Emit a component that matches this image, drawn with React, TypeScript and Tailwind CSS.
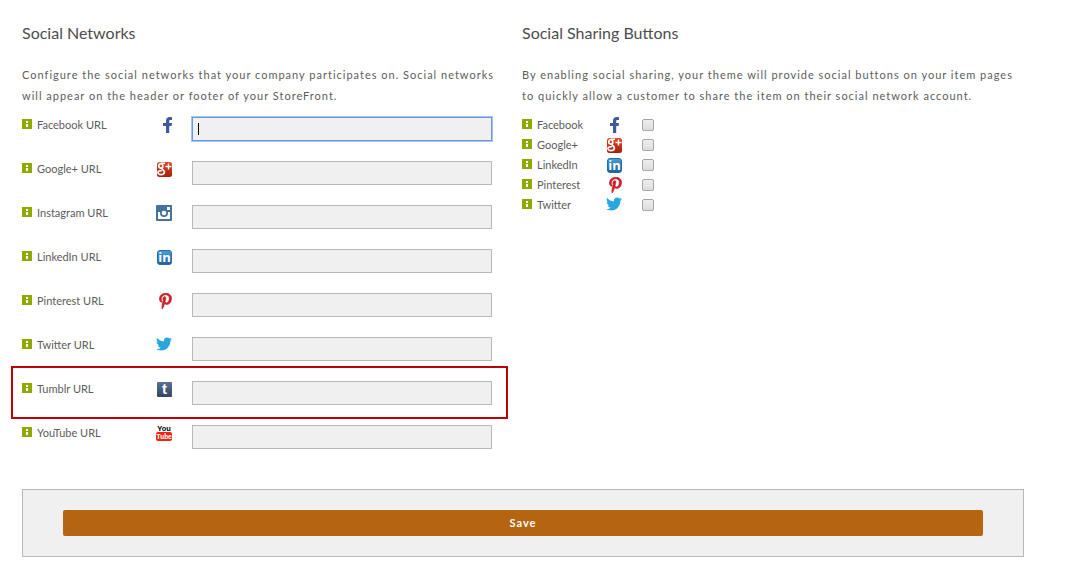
import type { ReactNode } from "react";
import { FaPinterestP, FaTwitter } from "react-icons/fa";

type NetworkId =
  | "facebook"
  | "google"
  | "instagram"
  | "linkedin"
  | "pinterest"
  | "twitter"
  | "tumblr"
  | "youtube";

interface Network {
  id: NetworkId;
  name: string;
}

const NETWORKS: Network[] = [
  { id: "facebook", name: "Facebook" },
  { id: "google", name: "Google+" },
  { id: "instagram", name: "Instagram" },
  { id: "linkedin", name: "LinkedIn" },
  { id: "pinterest", name: "Pinterest" },
  { id: "twitter", name: "Twitter" },
  { id: "tumblr", name: "Tumblr" },
  { id: "youtube", name: "YouTube" },
];

const SHARING_IDS: NetworkId[] = ["facebook", "google", "linkedin", "pinterest", "twitter"];
const SHARING = NETWORKS.filter((network) => SHARING_IDS.includes(network.id));

function InfoIcon() {
  return (
    <svg className="mt-[2px] size-[10px] shrink-0" viewBox="0 0 10 10" shapeRendering="crispEdges" aria-hidden="true">
      <rect width="10" height="10" fill="#8fa900" />
      <path d="M4 2h2v2H4zM4 5h2v3H4z" fill="#fff" />
    </svg>
  );
}

function FacebookIcon() {
  return (
    <svg className="h-4 w-[9px]" viewBox="0 0 9 16">
      <path
        d="M9 .2v2.700H7.600C6.500 2.900 6.200 3.400 6.200 4.300V6H9l-.4 2.900H6.200V16H3V8.900H0V6h3V4C3 1.500 4.500 0 6.800 0z"
        fill="#3f599c"
      />
    </svg>
  );
}

function GooglePlusIcon() {
  return (
    <svg className="size-4" viewBox="0 0 16 16">
      <defs>
        <linearGradient id="google-fill" x1="0" y1="0" x2="0" y2="1">
          <stop offset="0" stopColor="#e2492f" />
          <stop offset="1" stopColor="#a51f0c" />
        </linearGradient>
      </defs>
      <rect x="1" y="1" width="15" height="15" rx="2.5" fill="url(#google-fill)" />
      <g fill="none" stroke="#fff">
        <ellipse cx="4.800" cy="4.900" rx="2" ry="2.300" strokeWidth="1.700" />
        <path
          d="M5 2.200h4M6.300 7c-1.400 1.400 2.100 1.800 2.100 4 0 1.800-1.600 2.600-3.400 2.600S2 12.800 2 11.600c0-1.500 1.800-2 3.800-2"
          strokeWidth="1.600"
        />
        <path d="M12.500 2.500v6M9.500 5.500h6" strokeWidth="1.400" />
      </g>
    </svg>
  );
}

function InstagramIcon() {
  return (
    <svg className="size-4" viewBox="0 0 16 16">
      <rect width="16" height="16" rx="1" fill="#4672a0" />
      <rect x="11" y="2" width="3" height="3" fill="#fff" />
      <path d="M2 7h12v6.500a.5.5 0 0 1-.5.5h-11a.5.5 0 0 1-.5-.5z" fill="#fff" />
      <circle cx="8" cy="8" r="4" fill="#4672a0" />
      <circle cx="8" cy="8" r="2.300" fill="#fff" />
    </svg>
  );
}

function LinkedInIcon() {
  return (
    <svg className="size-4" viewBox="0 0 16 16">
      <defs>
        <linearGradient id="linkedin-fill" x1="0" y1="0" x2="0" y2="1">
          <stop offset="0" stopColor="#4a9fd9" />
          <stop offset="1" stopColor="#1d5f9f" />
        </linearGradient>
      </defs>
      <rect x="1.500" y="1.500" width="14" height="14" rx="2.500" fill="url(#linkedin-fill)" stroke="#2a6aa5" />
      <text x="8.500" y="13" fill="#fff" textAnchor="middle" className="font-['Open_Sans',sans-serif] text-[13px] font-bold">
        in
      </text>
    </svg>
  );
}

function TumblrIcon() {
  return (
    <svg className="size-4" viewBox="0 0 16 16">
      <defs>
        <linearGradient id="tumblr-fill" x1="0" y1="0" x2="0" y2="1">
          <stop offset="0" stopColor="#587194" />
          <stop offset="1" stopColor="#34465f" />
        </linearGradient>
      </defs>
      <rect x="1" y="1" width="15" height="15" rx="1" fill="url(#tumblr-fill)" />
      <text x="8.500" y="13" fill="#fff" textAnchor="middle" className="font-['Liberation_Sans',sans-serif] text-[15px] font-bold">
        t
      </text>
    </svg>
  );
}

function YouTubeIcon() {
  return (
    <svg className="size-4 overflow-visible" viewBox="0 0 16 16">
      <text
        x="8"
        y="6"
        fill="#111"
        textAnchor="middle"
        className="font-['Roboto',sans-serif] text-[8px] leading-none font-bold"
      >
        You
      </text>
      <rect y="7" width="16" height="9" rx="2" fill="#f5200f" />
      <text
        x="8"
        y="14"
        fill="#fff"
        textAnchor="middle"
        className="font-['Roboto',sans-serif] text-[7px] leading-none font-bold"
      >
        Tube
      </text>
    </svg>
  );
}

const ICONS: Record<NetworkId, ReactNode> = {
  facebook: <FacebookIcon />,
  google: <GooglePlusIcon />,
  instagram: <InstagramIcon />,
  linkedin: <LinkedInIcon />,
  pinterest: <FaPinterestP className="h-4 w-[13px] stroke-[#cb2027] stroke-[24] text-[#cb2027]" />,
  twitter: <FaTwitter className="-mt-px size-4 text-[#28a6e0]" />,
  tumblr: <TumblrIcon />,
  youtube: <YouTubeIcon />,
};

function UrlRow({ network }: { network: Network }) {
  const focused = network.id === "facebook";
  return (
    <div className="relative flex h-11 items-start">
      <div className="flex w-[134px] items-start gap-[5px]">
        <InfoIcon />
        <label htmlFor={`${network.id}-url`}>{network.name} URL</label>
      </div>
      <span className="mr-5 flex w-4 justify-end">{ICONS[network.id]}</span>
      <div className="relative w-[300px]">
        <input
          id={`${network.id}-url`}
          type="text"
          className={`block h-6 w-full border bg-[#f0f0f0] px-[5px] outline-none ${
            focused ? "border-[#6d97e0] ring-1 ring-[#a5c3f5]" : "border-[#b8b8b8]"
          }`}
        />
        {focused && <span className="absolute top-[6px] left-[6px] h-3 w-px bg-black" />}
      </div>
      {network.id === "tumblr" && (
        <div className="pointer-events-none absolute -top-[15px] -left-[11px] h-[53px] w-[497px] border-2 border-[#bd0000]" />
      )}
    </div>
  );
}

function SharingRow({ network }: { network: Network }) {
  return (
    <div className="flex h-5 items-start">
      <div className="flex w-[84px] items-start gap-[5px]">
        <InfoIcon />
        <label htmlFor={`${network.id}-share`}>{network.name}</label>
      </div>
      <span className={`mr-5 flex w-4 ${network.id === "facebook" ? "justify-center" : "justify-end"}`}>
        {ICONS[network.id]}
      </span>
      <input
        id={`${network.id}-share`}
        type="checkbox"
        className="mt-[2px] size-3 appearance-none rounded-[2px] border border-[#a6a6a6] bg-linear-to-b from-[#eeeeee] to-[#dcdcdc]"
      />
    </div>
  );
}

function Section({ title, intro, children }: { title: string; intro: string; children: ReactNode }) {
  return (
    <>
      <h2 className="mb-[19px] text-base leading-6 text-[#4d4d4d]">{title}</h2>
      <p className="mb-[11px] leading-[21px] tracking-[1px]">{intro}</p>
      {children}
    </>
  );
}

export default function App() {
  return (
    <form className="bg-white pt-[21px] pr-[55px] pb-5 pl-[22px] font-['Lato',sans-serif] text-[11px] leading-4 text-[#5c5c5c]">
      <div className="flex">
        <section className="w-[500px] shrink-0 pr-4">
          <Section
            title="Social Networks"
            intro="Configure the social networks that your company participates on. Social networks will appear on the header or footer of your StoreFront."
          >
            {NETWORKS.map((network) => (
              <UrlRow key={network.id} network={network} />
            ))}
          </Section>
        </section>
        <section className="flex-1">
          <Section
            title="Social Sharing Buttons"
            intro="By enabling social sharing, your theme will provide social buttons on your item pages to quickly allow a customer to share the item on their social network account."
          >
            {SHARING.map((network) => (
              <SharingRow key={network.id} network={network} />
            ))}
          </Section>
        </section>
      </div>
      <div className="mt-5 border border-[#b8b8b8] bg-[#f0f0f0] px-10 py-5">
        <button type="button" className="block h-[26px] w-full rounded-[2px] bg-[#b56412] font-bold tracking-[1px] text-white">
          Save
        </button>
      </div>
    </form>
  );
}
